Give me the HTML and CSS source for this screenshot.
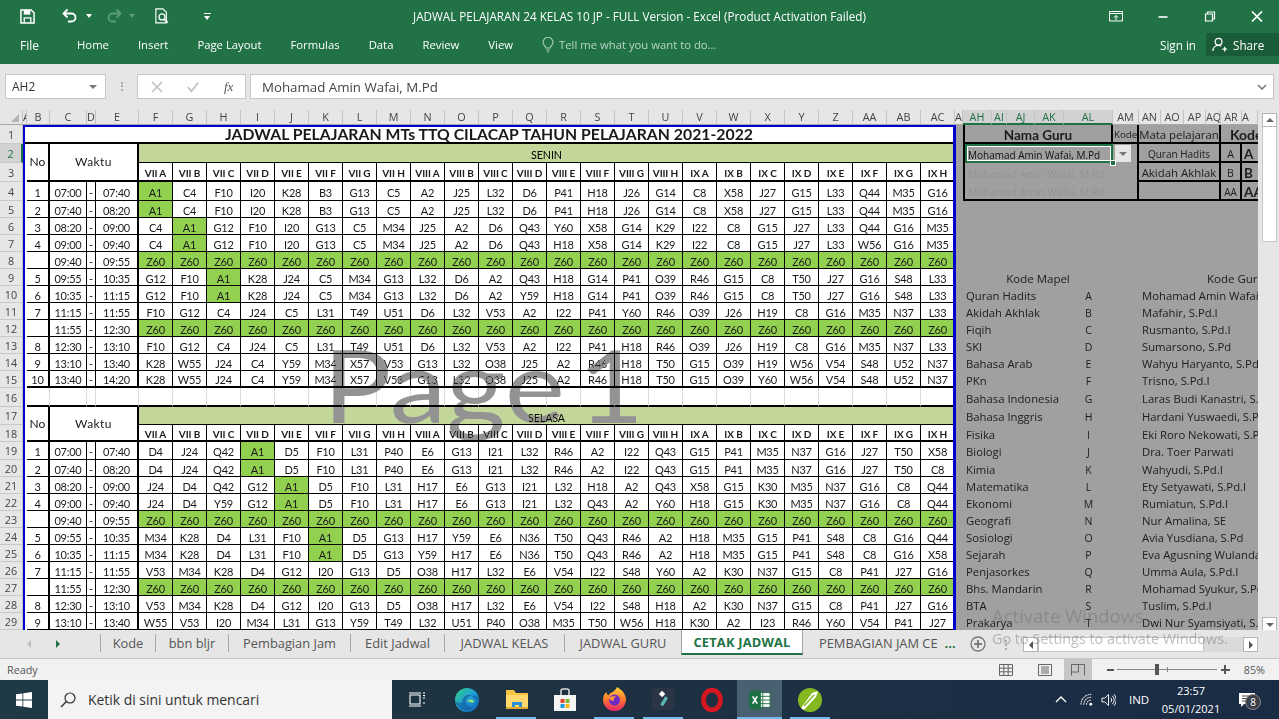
FILE: index.html
```html
<!DOCTYPE html>
<html lang="en">
<head>
<meta charset="utf-8">
<title>JADWAL PELAJARAN 24 KELAS 10 JP - Excel</title>
<link rel="stylesheet" href="styles.css">
</head>
<body>
<div class="app">
<header class="titlebar">
  <svg class="qa save" viewBox="0 0 16 16"><path d="M1 1h11l3 3v11H1z" fill="none" stroke="#fff" stroke-width="1.6"/><path d="M4 1h7v5H4z" fill="#fff"/><path d="M4.5 15V9.5h7V15" fill="none" stroke="#fff" stroke-width="1.4"/></svg>
  <svg class="qa undo" viewBox="0 0 16 16"><path d="M3 5.5h7.5a4 4 0 0 1 0 8H7" fill="none" stroke="#fff" stroke-width="1.8"/><path d="M6.5 1.5l-4 4 4 4" fill="none" stroke="#fff" stroke-width="1.8"/></svg>
  <span class="caret"></span>
  <svg class="qa redo" viewBox="0 0 16 16"><path d="M13 5.5H5.5a4 4 0 0 0 0 8H9" fill="none" stroke="#5d9b7b" stroke-width="1.8"/><path d="M9.5 1.5l4 4-4 4" fill="none" stroke="#5d9b7b" stroke-width="1.8"/></svg>
  <span class="caret dim"></span>
  <svg class="qa preview" viewBox="0 0 16 18"><path d="M1 .8h8l4 4v12H1z" fill="none" stroke="#fff" stroke-width="1.3"/><circle cx="8" cy="10" r="3.4" fill="none" stroke="#fff" stroke-width="1.5"/><path d="M10.5 12.5l4 4" stroke="#fff" stroke-width="2"/></svg>
  <span class="customize"></span>
  <div class="doc-title">JADWAL PELAJARAN 24 KELAS 10 JP - FULL Version - Excel (Product Activation Failed)</div>
  <div class="window-controls">
    <svg class="wc" viewBox="0 0 14 11"><path d="M.5.5h13v9.5H.5zM.5 2.5h13" fill="none" stroke="#fff"/><path d="M7 9V4.5M5 6.5l2-2 2 2" fill="none" stroke="#fff"/></svg>
    <svg class="wc" viewBox="0 0 14 11"><path d="M2.5 6h9" stroke="#fff" stroke-width="1.6"/></svg>
    <svg class="wc" viewBox="0 0 14 11"><path d="M2.5 3h7v7h-7zM4.5 3V1h7v7h-2" fill="none" stroke="#fff" stroke-width="1.2"/></svg>
    <svg class="wc" viewBox="0 0 14 11"><path d="M2 .5l10 10M12 .5l-10 10" stroke="#fff" stroke-width="1.7"/></svg>
  </div>
</header>
<nav class="ribbon">
  <span class="file">File</span>
  <span class="rtab">Home</span><span class="rtab">Insert</span><span class="rtab">Page Layout</span><span class="rtab">Formulas</span><span class="rtab">Data</span><span class="rtab">Review</span><span class="rtab">View</span>
  <svg class="bulb" viewBox="0 0 12 16"><path d="M4 11C3.500 9 1 8 1 5.300a5 5 0 0 1 10 0C11 8 8.500 9 8 11zM4.300 13h3.400M5 15h2" fill="none" stroke="#a9cdb8" stroke-width="1.100"/></svg>
  <span class="tell">Tell me what you want to do...</span>
  <span class="signin">Sign in</span>
  <span class="share"><svg class="share-ic" viewBox="0 0 16 16"><circle cx="7" cy="5" r="3.600" fill="none" stroke="#fff" stroke-width="1.300"/><path d="M1 15c0-3.500 2.500-6 6-6 1 0 2 .2 2.800.7M11 13h5M13.500 10.500v5" fill="none" stroke="#fff" stroke-width="1.300"/></svg>Share</span>
</nav>
<section class="formula">
  <div class="namebox"><span>AH2</span><i class="tri"></i></div>
  <span class="grip"></span>
  <div class="fxbox">
    <svg class="fxb" viewBox="0 0 12 12"><path d="M1 1l10 10M11 1L1 11" stroke="#c2c2c2" stroke-width="1.600"/></svg>
    <svg class="fxb" viewBox="0 0 14 12"><path d="M1 6l4 5 8-10" fill="none" stroke="#c2c2c2" stroke-width="2"/></svg>
    <em>fx</em>
  </div>
  <div class="finput"><span>Mohamad Amin Wafai, M.Pd</span><svg class="chev" viewBox="0 0 10 6"><path d="M1 1l4 4 4-4" fill="none" stroke="#777" stroke-width="1.500"/></svg></div>
</section>
<main class="workspace">
<div class="gridview">
<table class="sheet">
<colgroup><col class="w23"><col class="w4"><col class="w23"><col class="w37"><col class="w9"><col class="w43"><col class="w34" span="24"><col class="w8"><col class="w29"><col class="w15"><col class="w28"><col class="w29"><col class="w49"><col class="w26"><col class="w22"><col class="w23"><col class="w22"><col class="w15"><col class="w21"><col class="w16"></colgroup>
<thead><tr class="chead"><th class="corner"><i></i><th class="clip">A<th>B<th>C<th>D<th>E<th>F<th>G<th>H<th>I<th>J<th>K<th>L<th>M<th>N<th>O<th>P<th>Q<th>R<th>S<th>T<th>U<th>V<th>W<th>X<th>Y<th>Z<th>AA<th>AB<th>AC<th class="clip">A<th class="hl">AH<th class="hl">AI<th class="hl">AJ<th class="hl">AK<th class="hl">AL<th>AM<th>AN<th>AO<th>AP<th>AQ<th>AR<th class="clip">A</thead>
<tbody>
<tr class="h19 thick"><th>1<td class="title" colspan="29">JADWAL PELAJARAN MTs TTQ CILACAP TAHUN PELAJARAN 2021-2022<td class="s" rowspan="29"><td class="s bl br bb boxhead" colspan="5">Nama Guru<td class="s br bb smallhead" colspan="1">Kode<td class="s bb br long" colspan="4">Mata pelajaran<td class="s bb kodehead" colspan="2">Kode
<tr class="h19"><th class="active">2<td class="acol" rowspan="28"><td class="merged" rowspan="2">No<td class="merged waktu" colspan="3" rowspan="2">Waktu<td class="band" colspan="24">SENIN<td class="s sel" colspan="5">Mohamad Amin Wafai, M.Pd<b class="handle"></b><td class="s br ddcell"><span class="dd"><i class="tri"></i></span><td class="s bb br sm" colspan="4">Quran Hadits<td class="s bb br mid">A<td class="s bb bold13">A
<tr class="h19 thick lab"><th>3<td>VII A<td>VII B<td>VII C<td>VII D<td>VII E<td>VII F<td>VII G<td>VII H<td>VIII A<td>VIII B<td>VIII C<td>VIII D<td>VIII E<td>VIII F<td>VIII G<td>VIII H<td>IX A<td>IX B<td>IX C<td>IX D<td>IX E<td>IX F<td>IX G<td>IX H<td class="s bl br ghost" colspan="6">Mohamad Amin Wafai, M.Pd<td class="s bb br long" colspan="4">Akidah Akhlak<td class="s bb br mid">B<td class="s bb bold13">B
<tr class="h19 d"><th>4<td>1<td>07:00<td>-<td>07:40<td class="g">A1<td>C4<td>F10<td>I20<td>K28<td>B3<td>G13<td>C5<td>A2<td>J25<td>L32<td>D6<td>P41<td>H18<td>J26<td>G14<td>C8<td>X58<td>J27<td>G15<td>L33<td>Q44<td>M35<td>G16<td class="s bl br bb ghost" colspan="6">Mohamad Amin Wafai, M.Pd<td class="s bb br" colspan="4"><td class="s bb br sm">AA<td class="s bb bold13">AA
<tr class="d"><th>5<td>2<td>07:40<td>-<td>08:20<td class="g">A1<td>C4<td>F10<td>I20<td>K28<td>B3<td>G13<td>C5<td>A2<td>J25<td>L32<td>D6<td>P41<td>H18<td>J26<td>G14<td>C8<td>X58<td>J27<td>G15<td>L33<td>Q44<td>M35<td>G16<td class="s" colspan="12">
<tr class="d"><th>6<td>3<td>08:20<td>-<td>09:00<td>C4<td class="g">A1<td>G12<td>F10<td>I20<td>G13<td>C5<td>M34<td>J25<td>A2<td>D6<td>Q43<td>Y60<td>X58<td>G14<td>K29<td>I22<td>C8<td>G15<td>J27<td>L33<td>Q44<td>G16<td>M35<td class="s" colspan="12">
<tr class="d"><th>7<td>4<td>09:00<td>-<td>09:40<td>C4<td class="g">A1<td>G12<td>F10<td>I20<td>G13<td>C5<td>M34<td>J25<td>A2<td>D6<td>Q43<td>H18<td>X58<td>G14<td>K29<td>I22<td>C8<td>G15<td>J27<td>L33<td>W56<td>G16<td>M35<td class="s" colspan="12">
<tr class="d z"><th>8<td><td>09:40<td>-<td>09:55<td>Z60<td>Z60<td>Z60<td>Z60<td>Z60<td>Z60<td>Z60<td>Z60<td>Z60<td>Z60<td>Z60<td>Z60<td>Z60<td>Z60<td>Z60<td>Z60<td>Z60<td>Z60<td>Z60<td>Z60<td>Z60<td>Z60<td>Z60<td>Z60<td class="s" colspan="12">
<tr class="d"><th>9<td>5<td>09:55<td>-<td>10:35<td>G12<td>F10<td class="g">A1<td>K28<td>J24<td>C5<td>M34<td>G13<td>L32<td>D6<td>A2<td>Q43<td>H18<td>G14<td>P41<td>O39<td>R46<td>G15<td>C8<td>T50<td>J27<td>G16<td>S48<td>L33<td class="s mapel-title" colspan="5">Kode Mapel<td class="s"><td class="s guru-title" colspan="6">Kode Guru
<tr class="d"><th>10<td>6<td>10:35<td>-<td>11:15<td>G12<td>F10<td class="g">A1<td>K28<td>J24<td>C5<td>M34<td>G13<td>L32<td>D6<td>A2<td>Y59<td>H18<td>G14<td>P41<td>O39<td>R46<td>G15<td>C8<td>T50<td>J27<td>G16<td>S48<td>L33<td class="s li" colspan="4">Quran Hadits<td class="s mid">A<td class="s"><td class="s li" colspan="6">Mohamad Amin Wafai, M.Pd
<tr class="d"><th>11<td>7<td>11:15<td>-<td>11:55<td>F10<td>G12<td>C4<td>J24<td>C5<td>L31<td>T49<td>U51<td>D6<td>L32<td>V53<td>A2<td>I22<td>P41<td>Y60<td>R46<td>O39<td>J26<td>H19<td>C8<td>G16<td>M35<td>N37<td>L33<td class="s li" colspan="4">Akidah Akhlak<td class="s mid">B<td class="s"><td class="s li" colspan="6">Mafahir, S.Pd.I
<tr class="d z"><th>12<td><td>11:55<td>-<td>12:30<td>Z60<td>Z60<td>Z60<td>Z60<td>Z60<td>Z60<td>Z60<td>Z60<td>Z60<td>Z60<td>Z60<td>Z60<td>Z60<td>Z60<td>Z60<td>Z60<td>Z60<td>Z60<td>Z60<td>Z60<td>Z60<td>Z60<td>Z60<td>Z60<td class="s li" colspan="4">Fiqih<td class="s mid">C<td class="s"><td class="s li" colspan="6">Rusmanto, S.Pd.I
<tr class="d"><th>13<td>8<td>12:30<td>-<td>13:10<td>F10<td>G12<td>C4<td>J24<td>C5<td>L31<td>T49<td>U51<td>D6<td>L32<td>V53<td>A2<td>I22<td>P41<td>H18<td>R46<td>O39<td>J26<td>H19<td>C8<td>G16<td>M35<td>N37<td>L33<td class="s li" colspan="4">SKI<td class="s mid">D<td class="s"><td class="s li" colspan="6">Sumarsono, S.Pd
<tr class="d"><th>14<td>9<td>13:10<td>-<td>13:40<td>K28<td>W55<td>J24<td>C4<td>Y59<td>M34<td>X57<td>V53<td>G13<td>L32<td>O38<td>J25<td>A2<td>R46<td>H18<td>T50<td>G15<td>O39<td>H19<td>W56<td>V54<td>S48<td>U52<td>N37<td class="s li" colspan="4">Bahasa Arab<td class="s mid">E<td class="s"><td class="s li" colspan="6">Wahyu Haryanto, S.Pd
<tr class="d thick"><th>15<td>10<td>13:40<td>-<td>14:20<td>K28<td>W55<td>J24<td>C4<td>Y59<td>M34<td>X57<td>V53<td>G13<td>L32<td>O38<td>J25<td>A2<td>R46<td>H18<td>T50<td>G15<td>O39<td>Y60<td>W56<td>V54<td>S48<td>U52<td>N37<td class="s li" colspan="4">PKn<td class="s mid">F<td class="s"><td class="s li" colspan="6">Trisno, S.Pd.I
<tr class="h19 thick blank"><th>16<td><td><td><td><td><td><td><td><td><td><td><td><td><td><td><td><td><td><td><td><td><td><td><td><td><td><td><td><td class="s li" colspan="4">Bahasa Indonesia<td class="s mid">G<td class="s"><td class="s li" colspan="6">Laras Budi Kanastri, S.Pd
<tr class="h18"><th>17<td class="merged" rowspan="2">No<td class="merged waktu" colspan="3" rowspan="2">Waktu<td class="band" colspan="24">SELASA<td class="s li" colspan="4">Bahasa Inggris<td class="s mid">H<td class="s"><td class="s li" colspan="6">Hardani Yuswaedi, S.Pd
<tr class="thick lab"><th>18<td>VII A<td>VII B<td>VII C<td>VII D<td>VII E<td>VII F<td>VII G<td>VII H<td>VIII A<td>VIII B<td>VIII C<td>VIII D<td>VIII E<td>VIII F<td>VIII G<td>VIII H<td>IX A<td>IX B<td>IX C<td>IX D<td>IX E<td>IX F<td>IX G<td>IX H<td class="s li" colspan="4">Fisika<td class="s mid">I<td class="s"><td class="s li" colspan="6">Eki Roro Nekowati, S.Pd
<tr class="h18 d"><th>19<td>1<td>07:00<td>-<td>07:40<td>D4<td>J24<td>Q42<td class="g">A1<td>D5<td>F10<td>L31<td>P40<td>E6<td>G13<td>I21<td>L32<td>R46<td>A2<td>I22<td>Q43<td>G15<td>P41<td>M35<td>N37<td>G16<td>J27<td>T50<td>X58<td class="s li" colspan="4">Biologi<td class="s mid">J<td class="s"><td class="s li" colspan="6">Dra. Toer Parwati
<tr class="d"><th>20<td>2<td>07:40<td>-<td>08:20<td>D4<td>J24<td>Q42<td class="g">A1<td>D5<td>F10<td>L31<td>P40<td>E6<td>G13<td>I21<td>L32<td>R46<td>A2<td>I22<td>Q43<td>G15<td>P41<td>M35<td>N37<td>G16<td>J27<td>T50<td>C8<td class="s li" colspan="4">Kimia<td class="s mid">K<td class="s"><td class="s li" colspan="6">Wahyudi, S.Pd.I
<tr class="d"><th>21<td>3<td>08:20<td>-<td>09:00<td>J24<td>D4<td>Q42<td>G12<td class="g">A1<td>D5<td>F10<td>L31<td>H17<td>E6<td>G13<td>I21<td>L32<td>H18<td>A2<td>Q43<td>X58<td>G15<td>K30<td>M35<td>N37<td>G16<td>C8<td>Q44<td class="s li" colspan="4">Matematika<td class="s mid">L<td class="s"><td class="s li" colspan="6">Ety Setyawati, S.Pd.I
<tr class="d"><th>22<td>4<td>09:00<td>-<td>09:40<td>J24<td>D4<td>Y59<td>G12<td class="g">A1<td>D5<td>F10<td>L31<td>H17<td>E6<td>G13<td>I21<td>L32<td>Q43<td>A2<td>Y60<td>H18<td>G15<td>K30<td>M35<td>N37<td>G16<td>C8<td>Q44<td class="s li" colspan="4">Ekonomi<td class="s mid">M<td class="s"><td class="s li" colspan="6">Rumiatun, S.Pd.I
<tr class="d z"><th>23<td><td>09:40<td>-<td>09:55<td>Z60<td>Z60<td>Z60<td>Z60<td>Z60<td>Z60<td>Z60<td>Z60<td>Z60<td>Z60<td>Z60<td>Z60<td>Z60<td>Z60<td>Z60<td>Z60<td>Z60<td>Z60<td>Z60<td>Z60<td>Z60<td>Z60<td>Z60<td>Z60<td class="s li" colspan="4">Geografi<td class="s mid">N<td class="s"><td class="s li" colspan="6">Nur Amalina, SE
<tr class="d"><th>24<td>5<td>09:55<td>-<td>10:35<td>M34<td>K28<td>D4<td>L31<td>F10<td class="g">A1<td>D5<td>G13<td>H17<td>Y59<td>E6<td>N36<td>T50<td>Q43<td>R46<td>A2<td>H18<td>M35<td>G15<td>P41<td>S48<td>C8<td>G16<td>Q44<td class="s li" colspan="4">Sosiologi<td class="s mid">O<td class="s"><td class="s li" colspan="6">Avia Yusdiana, S.Pd
<tr class="d"><th>25<td>6<td>10:35<td>-<td>11:15<td>M34<td>K28<td>D4<td>L31<td>F10<td class="g">A1<td>D5<td>G13<td>Y59<td>H17<td>E6<td>N36<td>T50<td>Q43<td>R46<td>A2<td>H18<td>M35<td>G15<td>P41<td>S48<td>C8<td>G16<td>X58<td class="s li" colspan="4">Sejarah<td class="s mid">P<td class="s"><td class="s li" colspan="6">Eva Agusning Wulandari
<tr class="d"><th>26<td>7<td>11:15<td>-<td>11:55<td>V53<td>M34<td>K28<td>D4<td>G12<td>I20<td>G13<td>D5<td>O38<td>H17<td>L32<td>E6<td>V54<td>I22<td>S48<td>Y60<td>A2<td>K30<td>N37<td>G15<td>C8<td>P41<td>J27<td>G16<td class="s li" colspan="4">Penjasorkes<td class="s mid">Q<td class="s"><td class="s li" colspan="6">Umma Aula, S.Pd.I
<tr class="d z"><th>27<td><td>11:55<td>-<td>12:30<td>Z60<td>Z60<td>Z60<td>Z60<td>Z60<td>Z60<td>Z60<td>Z60<td>Z60<td>Z60<td>Z60<td>Z60<td>Z60<td>Z60<td>Z60<td>Z60<td>Z60<td>Z60<td>Z60<td>Z60<td>Z60<td>Z60<td>Z60<td>Z60<td class="s li" colspan="4">Bhs. Mandarin<td class="s mid">R<td class="s"><td class="s li" colspan="6">Mohamad Syukur, S.Pd
<tr class="d"><th>28<td>8<td>12:30<td>-<td>13:10<td>V53<td>M34<td>K28<td>D4<td>G12<td>I20<td>G13<td>D5<td>O38<td>H17<td>L32<td>E6<td>V54<td>I22<td>S48<td>H18<td>A2<td>K30<td>N37<td>G15<td>C8<td>P41<td>J27<td>G16<td class="s li" colspan="4">BTA<td class="s mid">S<td class="s"><td class="s li" colspan="6">Tuslim, S.Pd.I
<tr class="d"><th>29<td>9<td>13:10<td>-<td>13:40<td>W55<td>V53<td>I20<td>M34<td>L31<td>G13<td>Y59<td>T49<td>L32<td>U51<td>P40<td>O38<td>M35<td>T50<td>W56<td>H18<td>K30<td>A2<td>I23<td>R46<td>Y60<td>V54<td>P41<td>J27<td class="s li" colspan="4">Prakarya<td class="s mid">T<td class="s"><td class="s li" colspan="6">Dwi Nur Syamsiyati, S.Pd
</tbody>
</table>
<div class="pageframe"></div>
<div class="pagemark">Page 1</div>
</div>
<aside class="vscroll">
  <span class="vbtn"><i class="up"></i></span>
  <span class="vthumb"></span>
  <span class="vbtn down"><i class="dn"></i></span>
</aside>
</main>
<section class="tabsbar">
  <i class="arrow-l"></i><i class="arrow-r"></i>
  <div class="tabs">
    <span class="tab t55">Kode</span><span class="tab t73">bbn bljr</span><span class="tab t122">Pembagian Jam</span><span class="tab t94">Edit Jadwal</span><span class="tab t120">JADWAL KELAS</span><span class="tab t117">JADWAL GURU</span><span class="tab t122 on">CETAK JADWAL</span><span class="tab last">PEMBAGIAN JAM CE</span><span class="more">...</span>
  </div>
  <svg class="plus" viewBox="0 0 16 16"><circle cx="8" cy="8" r="7" fill="none" stroke="#777" stroke-width="1.300"/><path d="M8 4v8M4 8h8" stroke="#666" stroke-width="1.500"/></svg>
  <span class="vdots"></span>
  <div class="hscroll"><span class="hbtn"><i class="al"></i></span><span class="hthumb"></span><span class="hbtn end"><i class="ar"></i></span></div>
</section>
<footer class="status">
  <span class="ready">Ready</span>
  <span class="vw"><svg viewBox="0 0 14 12"><path d="M.5.500h13v11H.5zM.5 4.200h13M.5 7.800h13M4.800.5v11M9.200.5v11" fill="none" stroke="#666"/></svg></span>
  <span class="vw"><svg viewBox="0 0 14 12"><path d="M.5.500h13v11H.5zM3 3h8M3 5h8M3 7h8M3 9h8" fill="none" stroke="#666"/></svg></span>
  <span class="vw sel-v"><svg viewBox="0 0 14 12"><path d="M.5 11.500V.5h13v11M.5 8h7V.5" fill="none" stroke="#666"/></svg></span>
  <span class="zminus"></span><span class="zline"><i class="ztick"></i><i class="zthumb"></i></span><span class="zplus"></span>
  <span class="zpct">85%</span>
</footer>
<footer class="taskbar">
  <svg class="start" viewBox="0 0 16 16"><path d="M0 2.300l6.500-.9v6.200H0zM7.300 1.300L16 0v7.600H7.300zM0 8.400h6.500v6.200L0 13.700zM7.300 8.400H16V16l-8.700-1.200z" fill="#fff"/></svg>
  <div class="search"><svg viewBox="0 0 16 16"><circle cx="10" cy="6" r="5" fill="none" stroke="#333" stroke-width="1.200"/><path d="M6.400 9.600L1 15" stroke="#333" stroke-width="1.400"/></svg><span>Ketik di sini untuk mencari</span></div>
  <svg class="ti taskview" viewBox="0 0 16 16"><path d="M1 3h10v9H1zM0 1h12M0 14h12M14 1h2M14 6h2M14 3.500h2v1M14 11h2" fill="none" stroke="#fff" stroke-width="1.100"/></svg>
  <svg class="ti edge" viewBox="0 0 24 24"><defs><linearGradient id="eg" x1="0" y1="0" x2="1" y2="1"><stop offset="0" stop-color="#35d07f"/><stop offset=".5" stop-color="#1f9fd8"/><stop offset="1" stop-color="#0b5cad"/></linearGradient></defs><circle cx="12" cy="12" r="12" fill="url(#eg)"/><path d="M24 13c0-3.500-3-5.500-6-5.500-4.500 0-7 3-7 6 0 3.500 3 6 7 6-2 2-4 3-6 3-6 0-11-5-12-10 3 3 6 3 7 1 1-5 6-8 9-6" fill="#0e4f94" opacity=".55"/><path d="M12 13c2-2 6-2 7 0 .5 2-3 2-4 1z" fill="#8fe07f"/></svg>
  <svg class="ti folder" viewBox="0 0 24 22"><path d="M1 2h8l2 3h12v15H1z" fill="#f5c443"/><path d="M1 7h22v13H1z" fill="#ffd96b"/><path d="M7 20v-6h10v6h-3v-3h-4v3z" fill="#2b8fd6"/><path d="M1 19h22v2H1z" fill="#e0a92d"/></svg>
  <svg class="ti store" viewBox="0 0 24 24"><path d="M1 7h22v16H1z" fill="#f4f4f4"/><path d="M8 7V3a2 2 0 0 1 2-2h4a2 2 0 0 1 2 2v4" fill="none" stroke="#ddd" stroke-width="1.500"/><path d="M7.500 11h4v4h-4z" fill="#e8432e"/><path d="M12.500 11h4v4h-4z" fill="#7cbb2a"/><path d="M7.500 16h4v4h-4z" fill="#1c9ae0"/><path d="M12.500 16h4v4h-4z" fill="#fbb915"/></svg>
  <svg class="ti firefox" viewBox="0 0 24 24"><defs><linearGradient id="ff" x1="0" y1="0" x2="0" y2="1"><stop offset="0" stop-color="#ffd23d"/><stop offset=".5" stop-color="#ff7a2e"/><stop offset="1" stop-color="#e5236e"/></linearGradient></defs><path d="M15 0c5 3 9 7 9 12.500A11.500 11.500 0 0 1 1 13C1 9 2.500 6.500 4.500 5c0 2 1 3 2 3.500C8 5 12 6 15 0z" fill="url(#ff)"/><circle cx="12.500" cy="13" r="5.500" fill="#6f2bc5"/><path d="M7 11c2-2 6-2 8-1-3 0-4 2-3 4-2 0-4-1-5-3z" fill="#ff9a2e"/></svg>
  <svg class="ti film" viewBox="0 0 24 24"><rect width="24" height="24" rx="3" fill="#2c3545"/><path d="M11 3l3.500 3.500L11 10 7.500 6.500z" fill="#fff"/><path d="M14.500 9l3 2-5.500 9-3-2z" fill="#5cb7b7"/></svg>
  <svg class="ti opera" viewBox="0 0 24 24"><ellipse cx="12" cy="12" rx="8.500" ry="10" fill="none" stroke="#d5181f" stroke-width="4.800"/></svg>
  <div class="excel-slot"><svg class="ti-x" viewBox="0 0 24 22"><path d="M8 3h15v16H8z" fill="#fff" stroke="#1d7044"/><path d="M15 3v16M8 7h15M8 11h15M8 15h15" stroke="#1d7044"/><path d="M0 2l13-2v22L0 20z" fill="#1d7044"/><path d="M4 7l5 8M9 7l-5 8" stroke="#fff" stroke-width="1.800"/></svg></div>
  <svg class="ti corel" viewBox="0 0 24 24"><circle cx="12" cy="12" r="12" fill="#83b81f"/><path d="M3 20L14 5l6-2-2 6L6 22z" fill="#fff"/><path d="M6 18L16 7" stroke="#83b81f" stroke-width="1.500"/></svg>
  <i class="ul u1"></i><i class="ul u2"></i><i class="ul u3"></i><i class="ul u4"></i><i class="ul u5"></i>
  <div class="tray">
    <svg class="t-up" viewBox="0 0 12 7"><path d="M1 6l5-5 5 5" fill="none" stroke="#fff" stroke-width="1.300"/></svg>
    <svg class="t-wifi" viewBox="0 0 16 14"><path d="M1 12a11 11 0 0 1 11-11M4 12a8 8 0 0 1 8-8M7 12a5 5 0 0 1 5-5" fill="none" stroke="#ddd" stroke-width="1.100" stroke-dasharray="2 .6"/><circle cx="11.500" cy="11.500" r="1.500" fill="#fff"/></svg>
    <svg class="t-vol" viewBox="0 0 16 14"><path d="M1 5h3l4-4v12L4 9H1z" fill="none" stroke="#fff"/><path d="M10 4.500a3 3 0 0 1 0 5M12 2.500a6 6 0 0 1 0 9M14 1a9 9 0 0 1 0 12" fill="none" stroke="#fff"/></svg>
    <span class="ind">IND</span>
    <span class="clock"><span>23:57</span><span>05/01/2021</span></span>
    <span class="note"><svg viewBox="0 0 16 14"><path d="M0 0h16v11H5l-3 3v-3H0z" fill="#fff"/><path d="M3 3h10M3 5.500h10M3 8h7" stroke="#444"/></svg><b>8</b></span>
  </div>
</footer>
</div>
<div class="activate"><span class="a1">Activate Windows</span><span class="a2">Go to Settings to activate Windows.</span></div>
</body>
</html>
```
FILE: styles.css
```css
*{box-sizing:border-box}
html,body{margin:0;padding:0}
body{width:1279px;height:719px;overflow:hidden;font-family:"Open Sans","Noto Sans",sans-serif;color:#222;position:relative;background:#e6e6e6}
.app{display:flex;flex-direction:column;width:1279px;height:719px}

.titlebar{flex:0 0 32px;background:#217346;display:flex;align-items:center;position:relative;color:#fff}
.qa{display:block;flex:none}
.save{width:15px;height:15px;margin-left:20px}
.undo{width:16px;height:16px;margin-left:26px}
.caret{width:0;height:0;border:3.500px solid transparent;border-top:4px solid #fff;border-bottom:0;margin-left:9px;flex:none}
.caret.dim{border-top-color:#5d9b7b;margin-left:6px}
.redo{width:16px;height:16px;margin-left:15px}
.preview{width:14px;height:16px;margin-left:19px}
.dim+.preview{margin-left:20px}
.customize{width:7px;height:6px;margin-left:35px;border-top:1px solid #fff;position:relative;flex:none}
.customize::after{content:"";position:absolute;left:0;top:2px;border:3.500px solid transparent;border-top:4px solid #fff;border-bottom:0}
.doc-title{position:absolute;left:413px;top:9px;font-size:11.700px;line-height:15px;white-space:nowrap;color:#fff}
.window-controls{margin-left:auto;display:flex;gap:33px;padding-right:15px;align-items:center}
.wc{width:14px;height:11px;display:block}

.ribbon{flex:0 0 32px;background:#217346;display:flex;align-items:center;color:#fff;font-size:11.300px;gap:29px;padding-bottom:7px;position:relative}
.file{margin-left:20px;margin-right:9px;font-size:12px;padding-top:2px}
.bulb{width:12px;height:16px;margin-left:0;flex:none;margin-right:-24px}
.tell{color:#b9d6c6;font-size:11.300px}
.signin{margin-left:auto;margin-right:-19px;font-size:11.700px}
.share{width:73px;height:23px;background:#1a5c38;display:flex;align-items:center;align-self:flex-start;margin-top:1px;padding-left:6px;gap:6px;font-size:11.700px}
.share-ic{width:15px;height:15px}

.formula{flex:0 0 46px;background:#e6e6e6;display:flex;padding:10px 5px 11px;align-items:stretch}
.namebox{width:101px;background:#fff;border:1px solid #c6c6c6;display:flex;align-items:center;justify-content:space-between;padding:0 8px 0 6px;font-size:12px;color:#333}
.tri{display:inline-block;width:0;height:0;border:4px solid transparent;border-top:4px solid #777;border-bottom:0}
.grip{width:2px;margin:8px 14px 8px 15px;border-left:2px dotted #aaa}
.fxbox{width:109px;background:#fff;border:1px solid #c6c6c6;display:flex;align-items:center;padding-left:13px;gap:24px}
.fxb{width:12px;height:12px}
.fxbox em{font-family:"Liberation Serif",serif;font-size:13px;color:#555;margin-left:1px}
.finput{width:1024px;margin-left:4px;background:#fff;border:1px solid #c6c6c6;display:flex;align-items:center;justify-content:space-between;padding:0 6px 0 11px;font-size:13.300px;color:#444}
.chev{width:10px;height:6px}

.workspace{flex:0 0 520px;display:flex;height:520px}
.gridview{width:1258px;height:520px;overflow:hidden;position:relative;background:#a0a0a0}
.sheet{border-collapse:separate;border-spacing:0;table-layout:fixed;width:1258px;font-family:Lato,"Liberation Sans",sans-serif;font-size:11px;letter-spacing:-.25px;color:#1a1a1a}
.w23{width:23px}.w4{width:4px}.w37{width:37px}.w43{width:43px}.w8{width:8px}.w9{width:9px}.w34{width:34px}.w29{width:29px}.w15{width:15px}.w28{width:28px}.w49{width:49px}.w26{width:26px}.w22{width:22px}.w21{width:21px}.w16{width:16px}
.sheet tr{height:17px}
.sheet tr.h19{height:19px}
.sheet tr.h18{height:18px}
.sheet tr.chead{height:15px}
.sheet th{background:#e6e6e6;font:400 10.800px/12px "Open Sans",sans-serif;color:#444;padding:1px 0 0;overflow:hidden;border-right:1px solid #c4c4c4;border-bottom:1px solid #c8c8c8;letter-spacing:0}
.sheet td{background:#fff;border-right:1px solid #000;border-bottom:1px solid #000;padding:3px 0 0;text-align:center;white-space:nowrap;overflow:hidden;line-height:12px}
.chead th{border-bottom:1px solid #a8a8a8;vertical-align:middle;padding:0}
.corner{position:relative}
.corner i{position:absolute;right:3px;bottom:2px;border-left:8px solid transparent;border-bottom:8px solid #b4b4b4}
.sheet th.clip{text-align:left}
.sheet th.hl{background:#d2d2d2;color:#217346;border-bottom:2px solid #217346}
.sheet th.active{background:#d2d2d2;color:#217346;border-right:2px solid #217346}

.sheet td.title{font-size:15.770px;font-weight:700;letter-spacing:.02px;border-right:0;padding:1px 0 0}
.thick td{border-bottom-width:2px}
.sheet td.acol{border:0}
.sheet td.merged{font-size:12px;letter-spacing:0;border-right-width:2px;border-bottom-width:2px;padding-top:0}
.sheet td.waktu{letter-spacing:.4px}
.sheet td.band{background:#c4d79b;font-size:10.700px;color:#000;letter-spacing:-.1px;padding-top:4px}
.lab td{font-size:10px;font-weight:700;padding-top:3px;letter-spacing:-.1px}
.d td:nth-of-type(1),.d td:nth-of-type(4){border-right-width:2px}
.z td{background:#92d050}
.z td:nth-of-type(-n+4){background:#fff}
.sheet td.g{background:#92d050}
.blank td{border-right-color:#dcdcdc}

.sheet td.s{background:transparent;border:0;font-family:"Open Sans",sans-serif;font-size:11.300px;font-weight:400;letter-spacing:0;color:#1c1c1c;padding-top:2px}
.sheet td.li{text-align:left;padding-left:3px}
.sheet td.mid{text-align:center;font-size:10.500px}
.sheet td.long{text-align:center;font-size:11.400px}
.sheet td.bl{border-left:2px solid #000}
.sheet td.br{border-right:2px solid #000}
.sheet td.bb{border-bottom:2px solid #000}
.sheet td.boxhead{font-family:Lato,sans-serif;font-weight:700;font-size:13.500px}
.sheet td.smallhead{font-size:9.700px;text-align:left;padding-left:1px}
.sheet td.kodehead{font-family:Lato,sans-serif;font-weight:700;font-size:14px;text-align:left;padding-left:9px}
.sheet td.sm{font-size:10px}
.sheet td.bold13{font-family:Lato,sans-serif;font-weight:700;font-size:13.500px;text-align:left;padding-left:2px;overflow:hidden}
.sheet td.sel{position:relative;text-align:left;padding-left:3px;font-size:10px;overflow:visible;border-left:2px solid #000;box-shadow:inset 0 0 0 2px #217346,inset 0 0 0 3px #fff;color:#111}
.handle{position:absolute;right:-3px;bottom:-3px;width:6px;height:6px;background:#217346;border:1px solid #fff}
.sheet td.ddcell{padding:1px 0 0 2px;vertical-align:top}
.dd{display:flex;width:16px;height:17px;background:#e6e6e6;align-items:center;justify-content:center}
.sheet td.ghost{text-align:left;padding-left:3px;color:#939393;font-size:10.300px}
.sheet td.mapel-title{padding-left:0;text-align:center;padding-right:0;font-size:11.500px}
.sheet td.guru-title{text-align:left;padding-left:68px;font-size:11.500px}

.pageframe{position:absolute;left:23px;top:15px;width:933px;height:600px;border:2px solid #0000cd;border-right-width:3px;pointer-events:none}
.pagemark{position:absolute;left:323px;top:214px;font:400 100px/120px Lato,"Liberation Sans",sans-serif;word-spacing:-14px;transform:scaleX(1.14);transform-origin:left center;color:#939393;mix-blend-mode:darken;white-space:nowrap;pointer-events:none}

.vscroll{width:21px;height:520px;background:#e6e6e6;display:flex;flex-direction:column;padding:3px 2px 0 4px}
.vbtn{height:14px;flex:none;background:#fff;border:1px solid #b6b6b6;display:flex;align-items:center;justify-content:center}
.vbtn.down{margin-top:auto;margin-bottom:-2px;height:15px}
.vthumb{height:115px;flex:none;background:#fff;border:1px solid #c6c6c6;border-top:0}
.up,.dn{width:0;height:0;border:4px solid transparent}
.up{border-bottom:4px solid #666;border-top:0}
.dn{border-top:4px solid #666;border-bottom:0}

.tabsbar{flex:0 0 29px;background:#e6e6e6;border-bottom:1px solid #c6c6c6;display:flex;position:relative;align-items:flex-start}
.arrow-l{position:absolute;left:27px;top:10px;border:4px solid transparent;border-right:4px solid #bbb;border-left:0}
.arrow-r{position:absolute;left:56px;top:10px;border:4px solid transparent;border-left:4px solid #217346;border-right:0}
.tabs{display:flex;margin-left:100px;height:25px;align-items:stretch;font-size:12.850px;color:#555}
.tab{display:flex;align-items:center;justify-content:center;border-left:1px solid #a6a6a6;margin:4px 0 3px;white-space:nowrap}
.t55{width:55px}.t73{width:73px}.t122{width:122px}.t94{width:94px}.t120{width:120px}.t117{width:117px}
.tab.on{margin:0;background:#fff;color:#217346;font-weight:700;border:1px solid #a6a6a6;border-top:0;border-bottom:2px solid #217346;letter-spacing:.2px}
.tab.on+.tab{border-left:0}
.tab.last{padding-left:16px}
.more{margin:4px 0 0 7px;color:#217346;font-weight:700;letter-spacing:0}
.plus{position:absolute;left:970px;top:6px;width:16px;height:16px}
.vdots{position:absolute;left:1005px;top:10px;height:10px;border-left:2px dotted #aaa}
.hscroll{position:absolute;left:1023px;top:7px;width:235px;height:15px;display:flex;background:#dadada}
.hbtn{width:15px;background:#fff;border:1px solid #b6b6b6;display:flex;align-items:center;justify-content:center}
.hbtn.end{margin-left:auto}
.hthumb{width:166px;background:#fff;border:1px solid #c6c6c6}
.al,.ar{width:0;height:0;border:4px solid transparent}
.al{border-right:4px solid #555;border-left:0}
.ar{border-left:4px solid #555;border-right:0}

.status{flex:0 0 21px;background:#f1f1f1;display:flex;align-items:center;font-size:10.800px;color:#555;position:relative}
.ready{margin-left:7px;margin-right:auto}
.vw{width:28px;height:21px;display:flex;align-items:center;justify-content:center;margin-left:11px;flex:none}
.vw svg{width:14px;height:12px}
.vw.sel-v{background:#c6c6c6;margin-left:5px}
.zminus{width:7px;height:2px;background:#555;margin-left:15px;flex:none}
.zline{width:100px;height:1px;background:#888;margin-left:3px;position:relative;flex:none}
.ztick{position:absolute;left:50px;top:-2px;height:5px;border-left:1px solid #888}
.zthumb{position:absolute;left:38px;top:-5px;width:4px;height:11px;background:#555}
.zplus{width:9px;height:9px;margin-left:4px;background:linear-gradient(#555,#555) center/9px 2px no-repeat,linear-gradient(#555,#555) center/2px 9px no-repeat;flex:none}
.zpct{margin-left:14px;margin-right:14px}

.taskbar{flex:0 0 39px;background:linear-gradient(90deg,#1f3a45,#1e3242 40%,#1a2b45);display:flex;align-items:center;position:relative;color:#fff}
.start{width:16px;height:16px;margin-left:16px;flex:none}
.search{width:344px;height:39px;background:#f3f3f3;margin-left:16px;display:flex;align-items:center;padding-left:12px;gap:12px;color:#333;font-size:13.900px}
.search svg{width:16px;height:16px}
.ti{position:absolute;display:block}
.taskview{left:409px;top:12px;width:16px;height:16px}
.edge{left:455px;top:8px;width:24px;height:24px}
.folder{left:505px;top:8px;width:24px;height:22px}
.store{left:553px;top:8px;width:24px;height:24px}
.firefox{left:602px;top:7px;width:24px;height:24px}
.film{left:652px;top:8px;width:22px;height:22px}
.opera{left:700px;top:8px;width:24px;height:24px}
.excel-slot{position:absolute;left:737px;top:0;width:45px;height:39px;background:#48606f;display:flex;align-items:center;justify-content:center}
.ti-x{width:22px;height:22px}
.corel{left:798px;top:8px;width:24px;height:24px}
.ul{position:absolute;bottom:0;height:2px;background:#76b9ed}
.u1{left:496px;width:40px}
.u2{left:594px;width:40px}
.u3{left:643px;width:40px}
.u4{left:737px;width:45px}
.u5{left:790px;width:40px}
.tray{position:absolute;right:0;top:0;height:39px;display:flex;align-items:center;font-size:12px}
.t-up{width:12px;height:7px;margin-right:13px}
.t-wifi{width:15px;height:14px;margin-right:6px}
.t-vol{width:15px;height:14px}
.ind{margin-left:13px;font-size:11.500px;width:20px}
.clock{display:flex;flex-direction:column;align-items:center;margin-left:12px;line-height:17.500px;font-size:11px;width:60px}
.note{position:relative;width:24px;margin:0 16px 0 18px;display:block}
.note svg{display:block;width:16px;height:14px}
.note b{position:absolute;left:6px;top:1px;width:16px;height:16px;border-radius:50%;background:#3b4048;border:1px solid #888;font-size:10px;line-height:14px;text-align:center;font-weight:400}

.activate{position:absolute;left:992px;top:604px;display:flex;flex-direction:column;pointer-events:none;color:rgba(110,110,110,.45);white-space:nowrap}
.a1{font-size:18.500px;line-height:24px}
.a2{font-size:14.400px;line-height:22px}
```
